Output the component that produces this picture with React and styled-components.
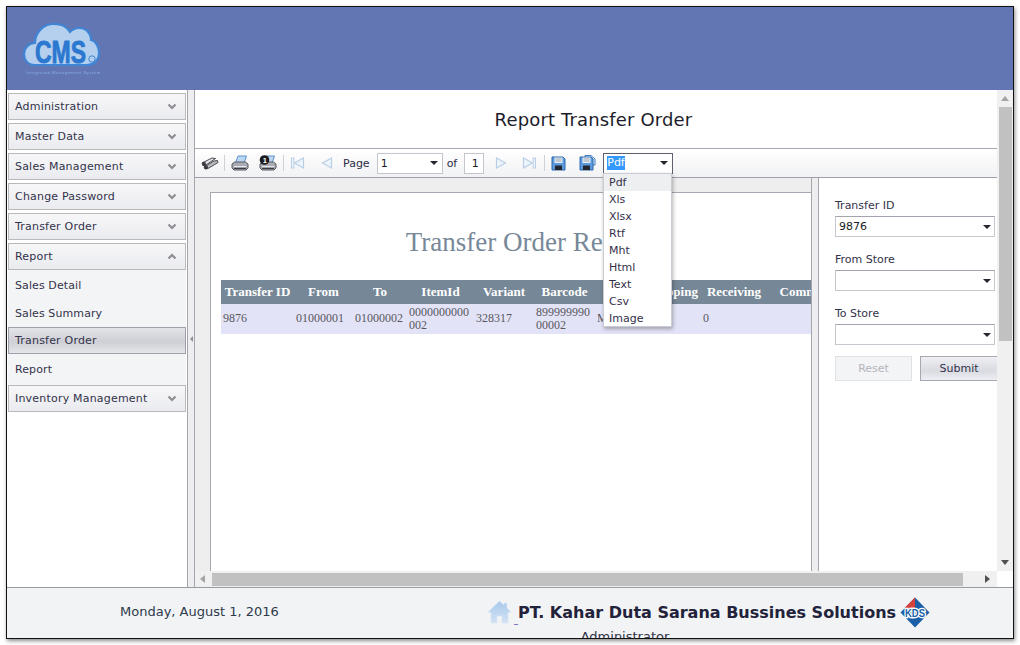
import React from "react";
import styled, { createGlobalStyle } from "styled-components";

const GlobalStyle = createGlobalStyle`
  html, body {
    margin: 0;
    padding: 0;
    background: #ffffff;
  }
  body {
    font-family: "DejaVu Sans", Verdana, sans-serif;
    font-size: 11px;
    color: #2b2b3a;
  }
`;

const Page = styled.div`
  width: 1020px;
  height: 645px;
  padding: 6px;
  box-sizing: border-box;
  overflow: hidden;
`;

const Frame = styled.div`
  width: 1008px;
  height: 633px;
  box-sizing: border-box;
  border: 1px solid #111111;
  box-shadow: 1px 2px 4px rgba(0, 0, 0, 0.45);
  display: flex;
  flex-direction: column;
  overflow: hidden;
`;

const Header = styled.header`
  height: 83px;
  flex: none;
  background: #6176b3;
  padding: 16px 0 0 16px;
  box-sizing: border-box;
`;

const Main = styled.div`
  flex: 1;
  min-height: 0;
  display: flex;
  background: #ffffff;
`;

const Sidebar = styled.nav`
  width: 180px;
  flex: none;
  padding: 3px 1px 0 1px;
  box-sizing: border-box;
`;

const MenuHead = styled.div`
  height: 27px;
  margin-bottom: ${p => (p.$selected ? 1 : 3)}px;
  box-sizing: border-box;
  border: 1px solid ${p => (p.$selected ? "#a0a0aa" : "#b9b9b9")};
  background: ${p =>
    p.$selected
      ? "linear-gradient(#e3e4e8, #cfd0d6 55%, #e4e5e9)"
      : "linear-gradient(#f7f7f9, #eaebef)"};
  display: flex;
  align-items: center;
  justify-content: space-between;
  padding: 0 8px 0 6px;
  color: #33334a;
  letter-spacing: 0.2px;
`;

const SubMenu = styled.div`
  background: #f3f4f6;
  margin-top: -3px;
  padding: 1px 0 2px;
`;

const SubItem = styled.div`
  height: 28px;
  line-height: 30px;
  padding-left: 7px;
  color: #33334a;
  letter-spacing: 0.1px;
`;

const Splitter = styled.div`
  width: 8px;
  flex: none;
  box-sizing: border-box;
  background: #eeeef0;
  border-left: 1px solid #a5a5ae;
  border-right: 1px solid #a5a5ae;
  display: flex;
  align-items: center;
  justify-content: center;
`;

const SplitArrow = styled.span`
  width: 0;
  height: 0;
  border-top: 3px solid transparent;
  border-bottom: 3px solid transparent;
  border-right: 3px solid #8f8f96;
`;

const Pane = styled.div`
  flex: 1;
  min-width: 0;
  display: grid;
  grid-template-columns: 802px 16px;
  grid-template-rows: 481px 16px;
`;

const Content = styled.div`
  display: flex;
  flex-direction: column;
  overflow: hidden;
  min-height: 0;
`;

const Title = styled.h1`
  margin: 0;
  height: 59px;
  flex: none;
  box-sizing: border-box;
  border-bottom: 1px solid #a8a8b2;
  padding-right: 5px;
  font-size: 18px;
  font-weight: 400;
  line-height: 60px;
  text-align: center;
  color: #1c1c2a;
  letter-spacing: 0.15px;
`;

const Toolbar = styled.div`
  position: relative;
  height: 29px;
  flex: none;
  box-sizing: border-box;
  border-bottom: 1px solid #a0a0aa;
  background: linear-gradient(#ffffff, #f1f2f4);
  display: flex;
  align-items: center;
  padding-left: 6px;
  color: #2b2b46;
`;

const ToolIcon = styled.span`
  display: inline-flex;
  flex: none;
  width: 18px;
  height: 18px;
  align-items: center;
  justify-content: center;
  margin-right: ${p => p.$after ?? 0}px;
`;

const Divider = styled.span`
  width: 1px;
  height: 16px;
  background: #cdd1d8;
  flex: none;
  margin-right: ${p => p.$after ?? 0}px;
`;

const ToolLabel = styled.span`
  flex: none;
  margin-right: ${p => p.$after ?? 0}px;
`;

const Field = styled.div`
  flex: none;
  box-sizing: border-box;
  width: ${p => p.$width}px;
  height: 21px;
  border: 1px solid ${p => p.$border || "#c3c6cd"};
  background: #ffffff;
  color: #1c1c24;
  display: flex;
  align-items: center;
  justify-content: space-between;
  padding: 0 4px 0 3px;
  margin-right: ${p => p.$after ?? 0}px;
`;

const Caret = styled.span`
  width: 0;
  height: 0;
  border-left: 4px solid transparent;
  border-right: 4px solid transparent;
  border-top: 4px solid #26262e;
`;

const Highlight = styled.span`
  background: #3399ff;
  color: #ffffff;
  line-height: 14px;
`;

const Dropdown = styled.div`
  position: absolute;
  left: 408px;
  top: 24px;
  width: 69px;
  height: 154px;
  background: #ffffff;
  border: 1px solid #c9ccd2;
  box-shadow: 1px 2px 4px rgba(0, 0, 0, 0.3);
  box-sizing: border-box;
  z-index: 5;
`;

const Option = styled.div`
  height: 17px;
  line-height: 17px;
  padding-left: 5px;
  color: #35304a;
  background: ${p => (p.$active ? "#eeeff1" : "transparent")};
`;

const Workspace = styled.div`
  flex: 1;
  min-height: 0;
  display: flex;
`;

const Viewer = styled.div`
  width: 616px;
  flex: none;
  box-sizing: border-box;
  background: #eeeeef;
  padding: 14px 0 0 15px;
  overflow: hidden;
`;

const ReportPage = styled.div`
  height: 100%;
  background: #ffffff;
  border-left: 1px solid #a8a8b2;
  border-top: 1px solid #a8a8b2;
  padding: 34px 0 0 10px;
  box-sizing: border-box;
  font-family: "Liberation Serif", "Times New Roman", serif;
`;

const ReportTitle = styled.div`
  width: 610px;
  font-size: 27px;
  line-height: 30px;
  color: #778899;
  text-align: center;
  margin-bottom: 23px;
`;

const Table = styled.table`
  border-collapse: collapse;
  table-layout: fixed;
  width: 626px;
  font-size: 12px;
  color: #58585c;
`;

const Th = styled.th`
  width: ${p => p.$width}px;
  height: 24px;
  padding: 0;
  background: #768797;
  color: #ffffff;
  font-size: 13px;
  font-weight: 700;
  text-align: center;
  white-space: nowrap;
  overflow: hidden;
`;

const Td = styled.td`
  height: 30px;
  padding: 0 0 1px 2px;
  box-sizing: border-box;
  background: #e3e3f8;
  line-height: 13px;
  word-break: break-all;
  vertical-align: middle;
`;

const Params = styled.form`
  flex: 1;
  min-width: 0;
  padding: 21px 0 0 16px;
  background: #ffffff;
  overflow: hidden;
`;

const ParamField = styled.div`
  margin-bottom: ${p => p.$gap}px;
`;

const ParamLabel = styled.div`
  height: 14px;
  line-height: 14px;
  margin-bottom: 3px;
  color: #33334a;
`;

const ParamSelect = styled.div`
  width: 160px;
  height: 21px;
  box-sizing: border-box;
  border: 1px solid #c6c7ce;
  border-top-color: #a4a4ae;
  background: #ffffff;
  color: #1c1c24;
  display: flex;
  align-items: center;
  justify-content: space-between;
  padding: 0 3px;
`;

const ButtonRow = styled.div`
  display: flex;
  gap: 8px;
  width: 200px;
`;

const Button = styled.div`
  width: ${p => p.$width}px;
  height: 25px;
  flex: none;
  box-sizing: border-box;
  display: flex;
  align-items: center;
  justify-content: center;
  border: 1px solid ${p => (p.$disabled ? "#e0e2e5" : "#a8a8b2")};
  background: ${p =>
    p.$disabled ? "#f3f4f6" : "linear-gradient(#eff0f3, #d9dbe2 60%, #eeeff2)"};
  color: ${p => (p.$disabled ? "#b4b5ba" : "#33334a")};
`;

const VBar = styled.div`
  background: #f0f0f0;
  display: flex;
  flex-direction: column;
  align-items: center;
  padding-top: 1px;
`;

const VThumb = styled.div`
  width: 13px;
  height: 234px;
  margin-top: 6px;
  margin-bottom: auto;
  background: #c1c1c1;
`;

const HBar = styled.div`
  background: #f0f0f0;
  display: flex;
  align-items: center;
  padding: 0 7px 0 5px;
`;

const HThumb = styled.div`
  width: 751px;
  height: 13px;
  margin-left: 7px;
  margin-right: auto;
  background: #c1c1c1;
`;

const Arrow = styled.span`
  width: 0;
  height: 0;
  flex: none;
  ${p =>
    p.$dir === "up" &&
    "border-left:4px solid transparent;border-right:4px solid transparent;border-bottom:5px solid #a3a3a3;margin-top:5px;"}
  ${p =>
    p.$dir === "down" &&
    "border-left:4px solid transparent;border-right:4px solid transparent;border-top:5px solid #505050;margin-bottom:6px;"}
  ${p =>
    p.$dir === "left" &&
    "border-top:4px solid transparent;border-bottom:4px solid transparent;border-right:5px solid #a3a3a3;"}
  ${p =>
    p.$dir === "right" &&
    "border-top:4px solid transparent;border-bottom:4px solid transparent;border-left:5px solid #505050;"}
`;

const Footer = styled.footer`
  height: 51px;
  flex: none;
  box-sizing: border-box;
  border-top: 1px solid #9a9aa2;
  background: #f1f3f5;
  display: flex;
  padding-left: 113px;
  overflow: hidden;
`;

const DateText = styled.div`
  width: 367px;
  flex: none;
  font-size: 13px;
  line-height: 48px;
  color: #2e3a4a;
`;

const Brand = styled.div`
  flex: none;
  display: flex;
  flex-direction: column;
  padding-top: 9px;
`;

const BrandRow = styled.div`
  display: flex;
  align-items: center;
  height: 30px;
`;

const HomeLink = styled.span`
  align-self: flex-end;
  margin: 0 0 2px 2px;
  font-size: 8px;
  line-height: 8px;
  color: #5a3aa8;
`;

const BrandName = styled.div`
  font-size: 16px;
  font-weight: 700;
  color: #22223a;
  white-space: nowrap;
  margin: 0 4px 0 0;
`;

const UserName = styled.div`
  font-size: 13px;
  line-height: 14px;
  color: #33334a;
  text-align: center;
  width: 276px;
  margin-top: 3px;
`;

const Chevron = ({ up }) => (
  <svg width="10" height="7" viewBox="0 0 10 7">
    <polyline
      points={up ? "1.5,5.5 5,2 8.5,5.5" : "1.5,1.5 5,5 8.5,1.5"}
      fill="none"
      stroke="#8d8d92"
      strokeWidth="2.2"
    />
  </svg>
);

const CmsLogo = () => (
  <svg width="80" height="56" viewBox="0 0 80 56" style={{ display: "block" }}>
    <path
      d="M12 42 C4 42 1 36 1 31 C1 25 6 20 12 20 C12 10 20 1 31 1 C38 1 44 4 47 9 C50 6 53 5 56 5 C63 5 68 10 68 17 C73 18 76 24 76 30 C76 37 71 42 64 42 Z"
      fill="#b4d0ee"
      stroke="#3f86d6"
      strokeWidth="2.2"
    />
    <text
      x="12"
      y="40"
      fontFamily="Liberation Sans, sans-serif"
      fontWeight="700"
      fontSize="32"
      fill="#2c78d0"
      stroke="#2c78d0"
      strokeWidth="0.9"
      textLength="51"
      lengthAdjust="spacingAndGlyphs"
    >
      CMS
    </text>
    <circle cx="69" cy="36" r="3.2" fill="#b4d0ee" stroke="#3f86d6" strokeWidth="1" />
    <text
      x="3"
      y="51"
      fontFamily="Liberation Sans, sans-serif"
      fontSize="4"
      fill="#8fb4e6"
      textLength="74"
    >
      Integrated Management System
    </text>
  </svg>
);

const Binoculars = () => (
  <svg width="18" height="13" viewBox="0 0 18 13">
    <path d="M1 6 L11 1 L14.5 1.5 L5 8 L2 8.5 Z" fill="#e4e5e8" stroke="#4a4a50" />
    <path d="M3 10 L13 4 L16.5 3.5 L17 5.5 L7 11.5 L4 12 Z" fill="#b8bac0" stroke="#4a4a50" />
    <ellipse cx="3" cy="7" rx="2" ry="2.2" fill="#3a3a40" />
    <ellipse cx="5" cy="10.2" rx="2" ry="2" fill="#3a3a40" />
  </svg>
);

const Printer = ({ badge }) => (
  <svg width="18" height="16" viewBox="0 0 18 16">
    <path d="M7 1 H15.5 L13 8 H4.5 Z" fill="#bcd8f4" stroke="#5b93cc" />
    <path d="M1 9 L3.5 7 H14.5 L17 9 V13 L15 15 H3 L1 13 Z" fill="#a9acb3" stroke="#5a5b62" />
    <path d="M3 11.5 H15" stroke="#e8e9ec" />
    <path d="M3 13.5 H15" stroke="#3c3d42" strokeWidth="1.2" />
    {badge && <circle cx="5.5" cy="5" r="4.8" fill="#1c1c20" />}
    {badge && (
      <text x="3.8" y="7.6" fontSize="7.5" fontWeight="700" fill="#ffffff" fontFamily="Liberation Sans, sans-serif">
        1
      </text>
    )}
  </svg>
);

const NavIcon = ({ dir, bar }) => (
  <svg width="14" height="12" viewBox="0 0 14 12">
    <g transform={dir === "right" ? "translate(14 0) scale(-1 1)" : undefined}>
      <path d="M12.5 1 V11 L3.5 6 Z" fill="#eef4fb" stroke="#b9cfe6" strokeWidth="1.2" />
      {bar && <rect x="0.5" y="1" width="2.4" height="10" fill="#eef4fb" stroke="#b9cfe6" />}
    </g>
  </svg>
);

const Floppy = ({ copy }) => (
  <svg width="17" height="16" viewBox="0 0 17 16">
    {copy && <path d="M6 0.5 H12 L16 4 V10 H6 Z" fill="#e3effb" stroke="#3f7fc4" />}
    <path d="M1 2 H12 L14 4 V15 H1 Z" fill="#5b9ade" stroke="#2f67a8" />
    <rect x="3.5" y="2.5" width="8" height="5.5" fill="#e8eef6" />
    <path d="M4.5 4 H10.5 M4.5 6 H10.5" stroke="#9aa3b0" />
    <rect x="4" y="10.5" width="7" height="4.5" fill="#23262c" />
  </svg>
);

const HomeIcon = () => (
  <svg width="25" height="24" viewBox="0 0 25 24">
    <defs>
      <linearGradient id="homeFill" x1="0" y1="0" x2="0" y2="1">
        <stop offset="0" stopColor="#a9c8ec" />
        <stop offset="1" stopColor="#d2e2f5" />
      </linearGradient>
    </defs>
    <path
      d="M12.5 1 L17 5 V3 H20 V8 L24 12 L21 12.5 V23 H15 V16 H10 V23 H4 V12.5 L1 12 Z"
      fill="url(#homeFill)"
      stroke="#dbe6f3"
      strokeWidth="0.8"
    />
  </svg>
);

const KdsLogo = () => (
  <svg width="30" height="31" viewBox="0 0 30 31" style={{ flex: "none" }}>
    <path d="M15 0.5 L29.5 15.5 L15 30.5 L0.5 15.5 Z" fill="#1a5fa8" />
    <path d="M15 0.5 L15 11 L4.5 11 Z" fill="#d8413a" />
    <text
      x="5"
      y="19.5"
      fontSize="10"
      fontWeight="700"
      fill="#1a5fa8"
      stroke="#ffffff"
      strokeWidth="2.6"
      paintOrder="stroke"
      fontFamily="Liberation Sans, sans-serif"
      textLength="20"
      lengthAdjust="spacingAndGlyphs"
    >
      KDS
    </text>
  </svg>
);

const topMenus = [
  "Administration",
  "Master Data",
  "Sales Management",
  "Change Password",
  "Transfer Order"
];

const formats = ["Pdf", "Xls", "Xlsx", "Rtf", "Mht", "Html", "Text", "Csv", "Image"];

const columns = [
  ["Transfer ID", 73],
  ["From", 59],
  ["To", 54],
  ["ItemId", 67],
  ["Variant", 60],
  ["Barcode", 61],
  ["Unit", 50],
  ["Shipping", 56],
  ["Receiving", 66],
  ["Comment", 80]
];

const row = ["9876", "01000001", "01000002", "0000000000002", "328317", "89999999000002", "M", "", "0", ""];

const params = [
  ["Transfer ID", "9876"],
  ["From Store", ""],
  ["To Store", ""]
];

const App = () => (
  <Page>
    <GlobalStyle />
    <Frame>
      <Header>
        <CmsLogo />
      </Header>
      <Main>
        <Sidebar>
          {topMenus.map(name => (
            <MenuHead key={name}>
              {name}
              <Chevron />
            </MenuHead>
          ))}
          <MenuHead>
            Report
            <Chevron up />
          </MenuHead>
          <SubMenu>
            <SubItem>Sales Detail</SubItem>
            <SubItem>Sales Summary</SubItem>
            <MenuHead $selected>Transfer Order</MenuHead>
            <SubItem>Report</SubItem>
          </SubMenu>
          <MenuHead>
            Inventory Management
            <Chevron />
          </MenuHead>
        </Sidebar>
        <Splitter>
          <SplitArrow />
        </Splitter>
        <Pane>
          <Content>
            <Title>Report Transfer Order</Title>
            <Toolbar>
              <ToolIcon $after={5}><Binoculars /></ToolIcon>
              <Divider $after={6} />
              <ToolIcon $after={10}><Printer /></ToolIcon>
              <ToolIcon $after={6}><Printer badge /></ToolIcon>
              <Divider $after={5} />
              <ToolIcon $after={10}><NavIcon dir="left" bar /></ToolIcon>
              <ToolIcon $after={8}><NavIcon dir="left" /></ToolIcon>
              <ToolLabel $after={7}>Page</ToolLabel>
              <Field $width={66} $after={4}>1<Caret /></Field>
              <ToolLabel $after={7}>of</ToolLabel>
              <Field $width={20} $after={9}>&nbsp;1</Field>
              <ToolIcon $after={9}><NavIcon dir="right" /></ToolIcon>
              <ToolIcon $after={6}><NavIcon dir="right" bar /></ToolIcon>
              <Divider $after={5} />
              <ToolIcon $after={10}><Floppy /></ToolIcon>
              <ToolIcon $after={7}><Floppy copy /></ToolIcon>
              <Field $width={70} $border="#60606c"><Highlight>Pdf</Highlight><Caret /></Field>
              <Dropdown>
                {formats.map((format, i) => (
                  <Option key={format} $active={i === 0}>{format}</Option>
                ))}
              </Dropdown>
            </Toolbar>
            <Workspace>
              <Viewer>
                <ReportPage>
                  <ReportTitle>Transfer Order Report</ReportTitle>
                  <Table>
                    <thead>
                      <tr>
                        {columns.map(([name, width]) => (
                          <Th key={name} $width={width}>{name}</Th>
                        ))}
                      </tr>
                    </thead>
                    <tbody>
                      <tr>
                        {row.map((value, i) => (
                          <Td key={i}>{value}</Td>
                        ))}
                      </tr>
                    </tbody>
                  </Table>
                </ReportPage>
              </Viewer>
              <Splitter />
              <Params>
                {params.map(([label, value], i) => (
                  <ParamField key={label} $gap={i === params.length - 1 ? 11 : 16}>
                    <ParamLabel>{label}</ParamLabel>
                    <ParamSelect>{value}<span /><Caret /></ParamSelect>
                  </ParamField>
                ))}
                <ButtonRow>
                  <Button $width={77} $disabled>Reset</Button>
                  <Button $width={78}>Submit</Button>
                </ButtonRow>
              </Params>
            </Workspace>
          </Content>
          <VBar>
            <Arrow $dir="up" />
            <VThumb />
            <Arrow $dir="down" />
          </VBar>
          <HBar>
            <Arrow $dir="left" />
            <HThumb />
            <Arrow $dir="right" />
          </HBar>
        </Pane>
      </Main>
      <Footer>
        <DateText>Monday, August 1, 2016</DateText>
        <Brand>
          <BrandRow>
            <HomeIcon />
            <HomeLink>_</HomeLink>
            <BrandName>PT. Kahar Duta Sarana Bussines Solutions</BrandName>
            <KdsLogo />
          </BrandRow>
          <UserName>Administrator</UserName>
        </Brand>
      </Footer>
    </Frame>
  </Page>
);

export default App;
